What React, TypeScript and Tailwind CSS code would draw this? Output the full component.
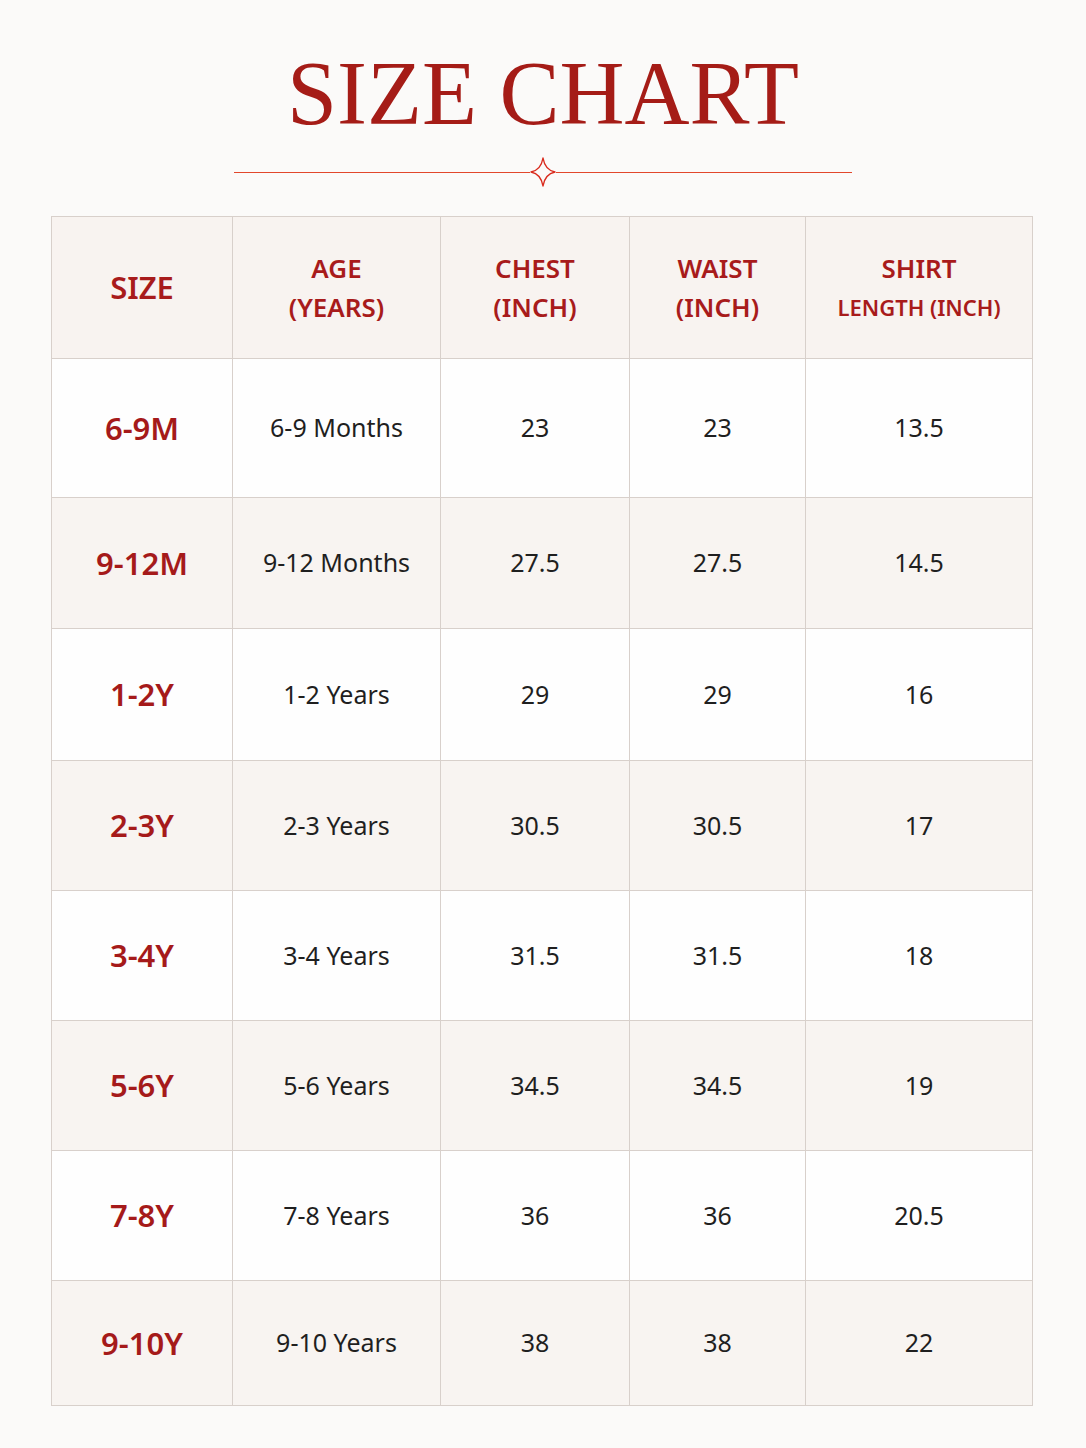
import React from 'react';

const rows = [
  { size: '6-9M', age: '6-9 Months', chest: '23', waist: '23', shirt: '13.5', h: 'h-[139px]', alt: false },
  { size: '9-12M', age: '9-12 Months', chest: '27.5', waist: '27.5', shirt: '14.5', h: 'h-[131px]', alt: true },
  { size: '1-2Y', age: '1-2 Years', chest: '29', waist: '29', shirt: '16', h: 'h-[132px]', alt: false },
  { size: '2-3Y', age: '2-3 Years', chest: '30.5', waist: '30.5', shirt: '17', h: 'h-[130px]', alt: true },
  { size: '3-4Y', age: '3-4 Years', chest: '31.5', waist: '31.5', shirt: '18', h: 'h-[130px]', alt: false },
  { size: '5-6Y', age: '5-6 Years', chest: '34.5', waist: '34.5', shirt: '19', h: 'h-[130px]', alt: true },
  { size: '7-8Y', age: '7-8 Years', chest: '36', waist: '36', shirt: '20.5', h: 'h-[130px]', alt: false },
  { size: '9-10Y', age: '9-10 Years', chest: '38', waist: '38', shirt: '22', h: 'h-[125px]', alt: true },
];

const Divider = () => (
  <div className="flex items-center justify-center w-[618px] mx-auto">
    <div className="flex-1 border-t border-[#e2472c]" />
    <svg width="26" height="30" viewBox="0 0 26 30" className="shrink-0">
      <path
        d="M13 1 Q15 13 25 15 Q15 17 13 29 Q11 17 1 15 Q11 13 13 1 Z"
        fill="#fbfaf9"
        stroke="#d92b1e"
        strokeWidth="1.4"
        strokeLinejoin="round"
      />
    </svg>
    <div className="flex-1 border-t border-[#e2472c]" />
  </div>
);

const cell = 'border border-[#d8d0cb] text-center align-middle p-0';

export default function App() {
  return (
    <div className="min-h-[1448px] w-full bg-[#fbfaf9] pt-[49px] font-['Noto_Sans',sans-serif]">
      <h1 className="text-center font-['Liberation_Serif',serif] text-[90px] leading-none text-[#a51c17]">
        SIZE CHART
      </h1>
      <div className="mt-[18px]">
        <Divider />
      </div>

      <table className="mt-[29px] ml-[51px] border-collapse table-fixed w-[981px]">
        <colgroup>
          <col className="w-[181px]" />
          <col className="w-[208px]" />
          <col className="w-[189px]" />
          <col className="w-[176px]" />
          <col className="w-[227px]" />
        </colgroup>
        <thead>
          <tr className="h-[142px] bg-[#f8f3f0] text-[#a81b1b] font-semibold">
            <th className={`${cell} text-[31px] font-semibold`}>SIZE</th>
            <th className={`${cell} text-[26px] leading-[39px] font-semibold`}>
              AGE
              <br />
              (YEARS)
            </th>
            <th className={`${cell} text-[26px] leading-[39px] font-semibold`}>
              CHEST
              <br />
              (INCH)
            </th>
            <th className={`${cell} text-[26px] leading-[39px] font-semibold`}>
              WAIST
              <br />
              (INCH)
            </th>
            <th className={`${cell} font-semibold`}>
              <span className="text-[26px] leading-[39px]">SHIRT</span>
              <br />
              <span className="text-[22px] leading-[39px]">LENGTH (INCH)</span>
            </th>
          </tr>
        </thead>
        <tbody>
          {rows.map((r) => (
            <tr key={r.size} className={`${r.h} ${r.alt ? 'bg-[#f8f4f1]' : 'bg-[#fefefe]'}`}>
              <td className={`${cell} text-[31px] font-semibold text-[#a51a1a]`}>{r.size}</td>
              <td className={`${cell} text-[25px] text-[#1f1f1f]`}>{r.age}</td>
              <td className={`${cell} text-[25px] text-[#1f1f1f]`}>{r.chest}</td>
              <td className={`${cell} text-[25px] text-[#1f1f1f]`}>{r.waist}</td>
              <td className={`${cell} text-[25px] text-[#1f1f1f]`}>{r.shirt}</td>
            </tr>
          ))}
        </tbody>
      </table>
    </div>
  );
}
